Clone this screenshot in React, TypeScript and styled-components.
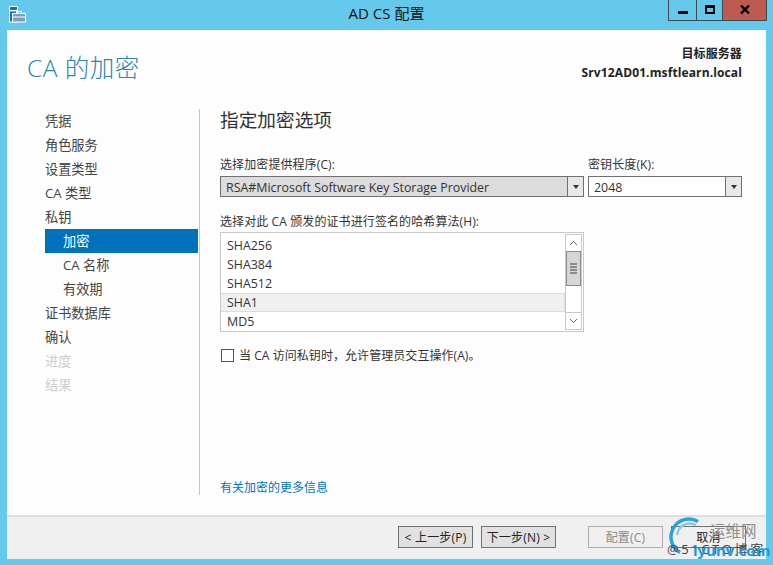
import React from "react";
import styled, { createGlobalStyle } from "styled-components";

const FONT = `"Open Sans", "Noto Sans", "Noto Sans CJK SC", sans-serif`;

const Global = createGlobalStyle`
  html, body { margin: 0; padding: 0; background: #65c9eb; }
  * { box-sizing: border-box; }
  #root { width: 773px; height: 565px; overflow: hidden; }
`;

const Win = styled.div`
  position: relative;
  width: 773px;
  height: 565px;
  background: #65c9eb;
  display: flex;
  flex-direction: column;
  font-family: ${FONT};
  color: #333;
  font-size: 12px;
`;
const TitleBar = styled.div`
  height: 29px;
  flex: none;
  display: flex;
  align-items: flex-start;
  padding: 6px 0 0 9px;
`;
const AppIcon = styled.svg`
  width: 17px;
  height: 17px;
  flex: none;
`;
const Title = styled.div`
  flex: 1;
  text-align: center;
  font-size: 15px;
  line-height: 17px;
  color: #111;
  margin-top: -1px;
  padding-left: 79px;
`;
const Controls = styled.div`
  display: flex;
  margin-top: -6px;
  margin-right: 6px;
  height: 21px;
  border: 1px solid #3e4a52;
  border-top: 0;
`;
const Ctl = styled.div<{ $w: number; $close?: boolean }>`
  width: ${(p) => p.$w}px;
  background: ${(p) => (p.$close ? "#bf5a50" : "transparent")};
  display: flex;
  align-items: center;
  justify-content: center;
  & + & { border-left: 1px solid #3e4a52; }
`;
const MinGlyph = styled.div`
  width: 10px;
  height: 3px;
  background: #000;
  margin-top: 4px;
`;
const MaxGlyph = styled.div`
  width: 10px;
  height: 9px;
  border: 2px solid #000;
  border-top-width: 3px;
  margin-top: -2px;
`;
const CloseGlyph = styled.svg`
  width: 10px;
  height: 9px;
  margin-top: -1px;
`;
const Client = styled.div`
  margin: 0 7px 6px;
  flex: 1;
  min-height: 0;
  background: #fdfdfd;
  border-top: 1px solid #8fb4c4;
  display: flex;
  flex-direction: column;
`;
const Head = styled.div`
  height: 79px;
  flex: none;
  display: flex;
  justify-content: space-between;
  padding: 15px 24px 0 20px;
`;
const PageTitle = styled.div`
  font-size: 24.5px;
  line-height: 46px;
  color: #2a86ac;
  font-weight: 300;
  font-family: "Open Sans", "Noto Sans CJK SC", sans-serif;
  letter-spacing: 0.5px;
`;
const Target = styled.div`
  text-align: right;
  font-weight: 700;
  font-size: 12px;
  line-height: 19px;
  color: #222;
  letter-spacing: 0.12px;
  margin-top: -1px;
`;
const Body = styled.div`
  flex: 1;
  min-height: 0;
  display: flex;
`;
const Nav = styled.div`
  width: 191px;
  flex: none;
  padding: 0 0 0 38px;
  display: flex;
  flex-direction: column;
`;
const NavItem = styled.div<{ $sub?: boolean; $active?: boolean; $off?: boolean }>`
  height: 24px;
  line-height: 24px;
  font-size: 13.2px;
  padding-left: ${(p) => (p.$sub ? 18 : 0)}px;
  background: ${(p) => (p.$active ? "#0072bc" : "transparent")};
  color: ${(p) => (p.$active ? "#fff" : p.$off ? "#cfcfcf" : "#444")};
`;
const Divider = styled.div`
  width: 1px;
  height: 386px;
  margin: 0 0 0 1px;
  background: #c5c5c5;
  flex: none;
`;
const Main = styled.div`
  flex: 1;
  padding: 0 0 0 20px;
  display: flex;
  flex-direction: column;
  height: 386px;
`;
const Heading = styled.div`
  font-size: 18.67px;
  line-height: 22px;
  color: #333;
  margin-bottom: 24px;
`;
const Row = styled.div`
  display: flex;
  gap: 4px;
`;
const Field = styled.div<{ $w: number }>`
  width: ${(p) => p.$w}px;
`;
const Label = styled.div`
  font-size: 12px;
  line-height: 20px;
  height: 21px;
  color: #333;
  letter-spacing: 0.1px;
`;
const Combo = styled.div<{ $gray?: boolean }>`
  height: 21px;
  border: 1px solid #707070;
  background: ${(p) => (p.$gray ? "#dcdcdc" : "#fff")};
  display: flex;
  font-size: 12.4px;
  line-height: 21px;
  color: #333;
`;
const ComboText = styled.div`
  flex: 1;
  padding-left: 5px;
  white-space: nowrap;
  overflow: hidden;
`;
const ComboBtn = styled.div`
  width: 16px;
  flex: none;
  border-left: 1px solid #707070;
  background: #e8e8e8;
  display: flex;
  align-items: center;
  justify-content: center;
  &::after {
    content: "";
    border-left: 3.5px solid transparent;
    border-right: 3.5px solid transparent;
    border-top: 4px solid #333;
  }
`;
const Spacer = styled.div`
  height: 15px;
`;
const List = styled.div`
  width: 364px;
  height: 100px;
  margin-top: -1px;
  border: 1px solid #c8c8c8;
  background: #fff;
  display: flex;
  padding: 1px 1px 1px 0;
`;
const Items = styled.div`
  flex: 1;
  padding-top: 2px;
`;
const Item = styled.div<{ $sel?: boolean }>`
  height: 19px;
  line-height: 17px;
  padding-left: 6px;
  font-size: 12.4px;
  color: #333;
  border: 1px solid ${(p) => (p.$sel ? "#dcdcdc" : "transparent")};
  border-left-width: 0;
  background: ${(p) => (p.$sel ? "#f0f0f0" : "transparent")};
`;
const Scroll = styled.div`
  width: 17px;
  flex: none;
  border: 1px solid #c8c8c8;
  display: flex;
  flex-direction: column;
`;
const ScrollBtn = styled.div`
  height: 16px;
  flex: none;
  display: flex;
  align-items: center;
  justify-content: center;
`;
const Chevron = styled.svg`
  width: 9px;
  height: 6px;
`;
const Thumb = styled.div`
  height: 35px;
  flex: none;
  background: #d6d6d6;
  border: 1px solid #8c8c8c;
  display: flex;
  flex-direction: column;
  align-items: center;
  justify-content: center;
  gap: 1px;
`;
const Grip = styled.div`
  width: 7px;
  height: 2px;
  background: #8c8c8c;
`;
const Track = styled.div`
  flex: 1;
  border-bottom: 1px solid #c8c8c8;
`;
const CheckRow = styled.div`
  display: flex;
  align-items: center;
  gap: 5px;
  margin: 16px 0 0 1px;
  height: 14px;
  font-size: 12px;
  letter-spacing: 0.06px;
  color: #333;
  white-space: nowrap;
`;
const Box = styled.div`
  width: 13px;
  height: 13px;
  border: 1px solid #555;
  background: #fff;
  flex: none;
`;
const LinkText = styled.div`
  margin-top: auto;
  font-size: 12px;
  line-height: 16px;
  color: #0072bc;
  margin-bottom: -1px;
`;
const Footer = styled.div`
  height: 44px;
  flex: none;
  background: #f0f0f0;
  border-top: 2px solid #dfdfdf;
  display: flex;
  align-items: flex-start;
  padding: 9px 20px 0 391px;
  gap: 8px;
`;
const Btn = styled.div<{ $off?: boolean; $gapLeft?: number; $pale?: boolean }>`
  width: 75px;
  height: 22px;
  border: 1px solid ${(p) => (p.$off ? "#adadad" : "#707070")};
  background: ${(p) => (p.$off ? "#f0f0f0" : p.$pale ? "#f0f0f0" : "#e1e1e1")};
  color: ${(p) => (p.$off ? "#8a8a8a" : "#222")};
  font-size: 12px;
  letter-spacing: 0.2px;
  line-height: 21px;
  text-align: center;
  white-space: nowrap;
  margin-left: ${(p) => p.$gapLeft ?? 0}px;
`;
const Watermark = styled.div`
  position: absolute;
  left: 665px;
  top: 516px;
  width: 108px;
  height: 49px;
  pointer-events: none;
`;
const Arc = styled.svg`
  position: absolute;
  left: 4px;
  top: 1px;
  width: 44px;
  height: 44px;
`;
const WmCn = styled.div`
  position: absolute;
  left: 45px;
  top: 6px;
  font-size: 15.5px;
  line-height: 18px;
  color: #8f8f8f;
`;
const WmAt = styled.div`
  position: absolute;
  left: 2px;
  top: 25px;
  font-size: 13px;
  line-height: 16px;
  color: #444;
  white-space: nowrap;
  letter-spacing: 2.6px;
`;
const WmUrl = styled.div`
  position: absolute;
  left: 28px;
  top: 25px;
  font-size: 15px;
  line-height: 18px;
  font-weight: 700;
  color: #1f9ad6;
  white-space: nowrap;
`;

const navItems: { t: string; sub?: boolean; active?: boolean; off?: boolean }[] = [
  { t: "凭据" },
  { t: "角色服务" },
  { t: "设置类型" },
  { t: "CA 类型" },
  { t: "私钥" },
  { t: "加密", sub: true, active: true },
  { t: "CA 名称", sub: true },
  { t: "有效期", sub: true },
  { t: "证书数据库" },
  { t: "确认" },
  { t: "进度", off: true },
  { t: "结果", off: true },
];

export default function App() {
  return (
    <Win>
      <Global />
      <TitleBar>
        <AppIcon viewBox="0 0 17 17">
          <rect x="0.5" y="0.5" width="8" height="15.5" fill="#1d6fb8" stroke="#fff" />
          <rect x="1" y="4" width="7" height="1.4" fill="#fff" />
          <rect x="3.5" y="7.5" width="13" height="8.5" fill="#7f9db3" stroke="#fff" />
          <rect x="7.5" y="5.5" width="5" height="2" fill="none" stroke="#fff" />
          <rect x="4" y="10.5" width="12" height="1" fill="#fff" />
        </AppIcon>
        <Title>AD CS 配置</Title>
        <Controls>
          <Ctl $w={27}><MinGlyph /></Ctl>
          <Ctl $w={26}><MaxGlyph /></Ctl>
          <Ctl $w={44} $close>
            <CloseGlyph viewBox="0 0 10 9">
              <path d="M1 0.5 L9 8.5 M9 0.5 L1 8.5" stroke="#000" strokeWidth="2.4" fill="none" />
            </CloseGlyph>
          </Ctl>
        </Controls>
      </TitleBar>
      <Client>
        <Head>
          <PageTitle>CA 的加密</PageTitle>
          <Target>
            目标服务器
            <br />
            Srv12AD01.msftlearn.local
          </Target>
        </Head>
        <Body>
          <Nav>
            {navItems.map((n) => (
              <NavItem key={n.t} $sub={n.sub} $active={n.active} $off={n.off}>
                {n.t}
              </NavItem>
            ))}
          </Nav>
          <Divider />
          <Main>
            <Heading>指定加密选项</Heading>
            <Row>
              <Field $w={364}>
                <Label>选择加密提供程序(C):</Label>
                <Combo $gray>
                  <ComboText>RSA#Microsoft Software Key Storage Provider</ComboText>
                  <ComboBtn />
                </Combo>
              </Field>
              <Field $w={154}>
                <Label>密钥长度(K):</Label>
                <Combo>
                  <ComboText>2048</ComboText>
                  <ComboBtn />
                </Combo>
              </Field>
            </Row>
            <Spacer />
            <Label>选择对此 CA 颁发的证书进行签名的哈希算法(H):</Label>
            <List>
              <Items>
                <Item>SHA256</Item>
                <Item>SHA384</Item>
                <Item>SHA512</Item>
                <Item $sel>SHA1</Item>
                <Item>MD5</Item>
              </Items>
              <Scroll>
                <ScrollBtn>
                  <Chevron viewBox="0 0 9 6"><path d="M1 5 L4.5 1.5 L8 5" stroke="#666" fill="none" /></Chevron>
                </ScrollBtn>
                <Thumb><Grip /><Grip /><Grip /><Grip /></Thumb>
                <Track />
                <ScrollBtn>
                  <Chevron viewBox="0 0 9 6"><path d="M1 1 L4.5 4.5 L8 1" stroke="#666" fill="none" /></Chevron>
                </ScrollBtn>
              </Scroll>
            </List>
            <CheckRow>
              <Box />
              当 CA 访问私钥时，允许管理员交互操作(A)。
            </CheckRow>
            <LinkText>有关加密的更多信息</LinkText>
          </Main>
        </Body>
        <Footer>
          <Btn>&lt; 上一步(P)</Btn>
          <Btn>下一步(N) &gt;</Btn>
          <Btn $off $gapLeft={24}>配置(C)</Btn>
          <Btn $pale>取消</Btn>
        </Footer>
      </Client>
      <Watermark>
        <Arc viewBox="0 0 44 44">
          <path d="M29 4.4 A18 18 0 0 0 11 35.6" stroke="#2aa3dc" strokeWidth="3.5" fill="none" />
          <path d="M27 8 A13 13 0 0 0 8 18" stroke="#8fc4dc" strokeWidth="2.5" fill="none" />
        </Arc>
        <WmCn>运维网</WmCn>
        <WmAt>@51CTO博客</WmAt>
        <WmUrl>iyunv.com</WmUrl>
      </Watermark>
    </Win>
  );
}
